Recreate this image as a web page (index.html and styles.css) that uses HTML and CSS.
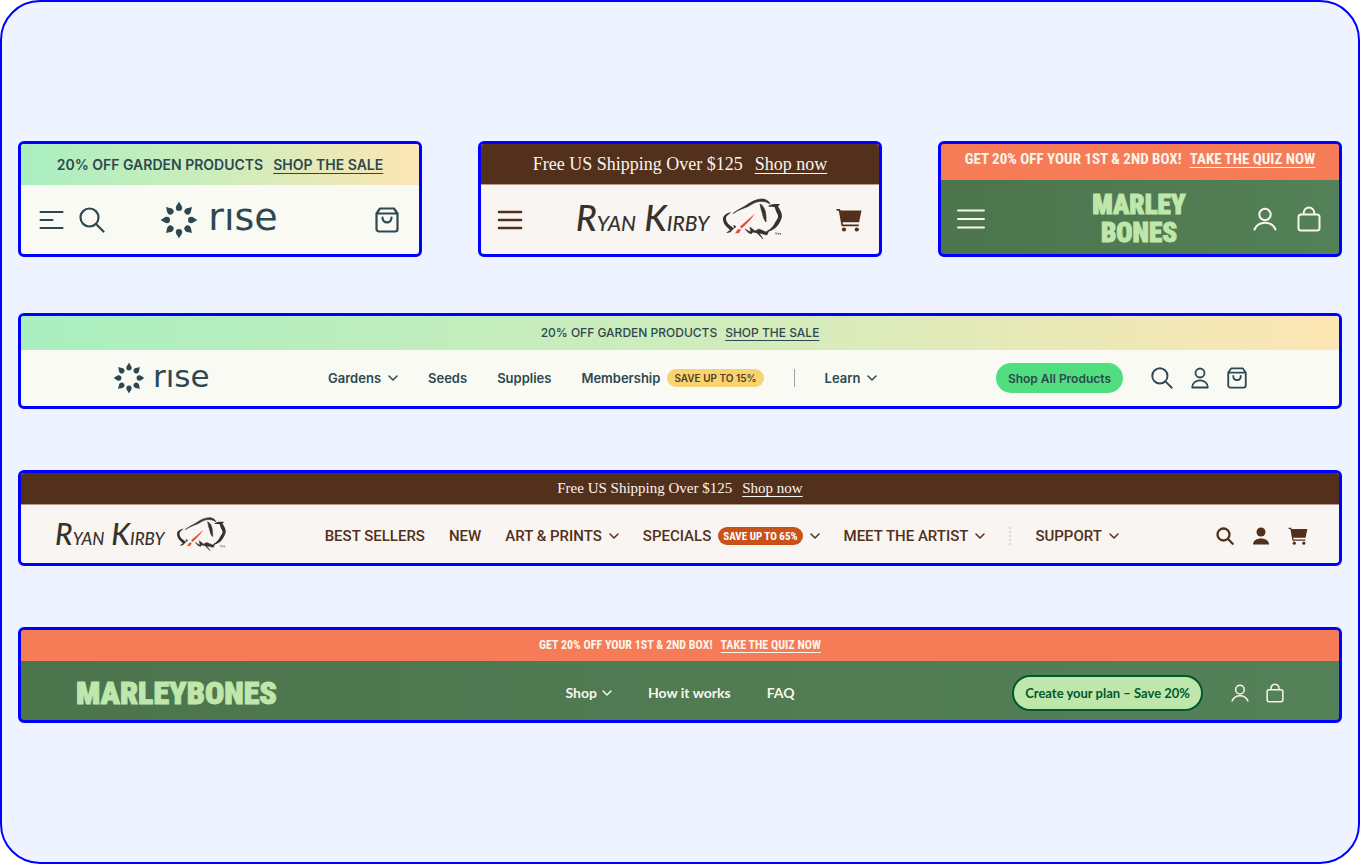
FILE: index.html
```
<!DOCTYPE html>
<html lang="en">
<head>
  <meta charset="utf-8">
  <meta name="viewport" content="width=device-width, initial-scale=1">
  <title>Store headers</title>
  <link rel="stylesheet" href="styles.css">
</head>
<body>

<!-- shared icons and logo marks -->
<svg class="sprite" aria-hidden="true">
  <symbol id="chevron" viewBox="0 0 10 6"><path d="M1 1l4 4 4-4" fill="none" stroke="currentColor" stroke-width="1.5" stroke-linecap="round" stroke-linejoin="round"/></symbol>
  <symbol id="menu-short" viewBox="0 0 24 20"><path d="M1 2h22M1 10h12M1 18h22" fill="none" stroke="currentColor" stroke-width="2" stroke-linecap="round"/></symbol>
  <symbol id="menu-bold" viewBox="0 0 26 20"><path d="M2 2h22M2 10h22M2 18h22" fill="none" stroke="currentColor" stroke-width="2.6" stroke-linecap="round"/></symbol>
  <symbol id="menu-thin" viewBox="0 0 28 20"><path d="M1 1.500h26M1 10h26M1 18.500h26" fill="none" stroke="currentColor" stroke-width="2" stroke-linecap="round"/></symbol>
  <symbol id="search" viewBox="0 0 26 26"><g fill="none" stroke="currentColor" stroke-width="2.200" stroke-linecap="round"><circle cx="10.500" cy="10.500" r="9"/><path d="M17 17l7.500 7.500"/></g></symbol>
  <symbol id="search-bold" viewBox="0 0 18 18"><g fill="none" stroke="currentColor" stroke-width="2.300" stroke-linecap="round"><circle cx="7.500" cy="7.500" r="6"/><path d="M12 12l4.700 4.700"/></g></symbol>
  <symbol id="bag-smile" viewBox="0 0 24 26"><g fill="none" stroke="currentColor" stroke-width="2.200" stroke-linejoin="round" stroke-linecap="round"><path d="M1.500 6.500L5 1.500h14l3.500 5V22a2.500 2.500 0 0 1-2.500 2.500H4A2.500 2.500 0 0 1 1.500 22zM1.500 6.500h21"/><path d="M7.500 10.500c0 6.500 9 6.500 9 0"/></g></symbol>
  <symbol id="user-bust" viewBox="0 0 18 22"><g fill="none" stroke="currentColor" stroke-width="1.800" stroke-linejoin="round"><circle cx="9" cy="6" r="4.500"/><path d="M1.200 20.500c0-9.500 15.600-9.500 15.600 0z"/></g></symbol>
  <symbol id="user-solid" viewBox="0 0 18 18"><circle cx="9" cy="5" r="4.500"/><path d="M1 17.500C1 9.500 17 9.500 17 17.500z"/></symbol>
  <symbol id="user-arc" viewBox="0 0 24 24"><g fill="none" stroke="currentColor" stroke-width="2" stroke-linecap="round"><circle cx="12" cy="7.500" r="5.700"/><path d="M1.500 22.500c4-9 17-9 21 0"/></g></symbol>
  <symbol id="cart" viewBox="0 0 26 24"><path d="M.5 1h3.300l.8 1.500h20.900l-2.400 11.800H6.500l.6 2.200h15.700v1.800H5.600L2.800 2.800H.5z"/><circle cx="8" cy="21.500" r="2.100"/><circle cx="20.800" cy="21.500" r="2.100"/></symbol>
  <symbol id="bag" viewBox="0 0 24 26"><g fill="none" stroke="currentColor" stroke-width="2" stroke-linejoin="round"><rect x="1.500" y="8.500" width="21" height="16" rx="2.500"/><path d="M6.500 8.500C6.500-1 17.500-1 17.500 8.500"/></g></symbol>

  <symbol id="seeds" viewBox="-19 -19 38 38">
    <path id="petal" d="M0-18.500C1-15.800 3.200-14.600 3.200-12.200A3.200 3.200 0 0 1-3.200-12.200C-3.200-14.600-1-15.800 0-18.500z"/>
    <use href="#petal" transform="rotate(45)"/>
    <use href="#petal" transform="rotate(90)"/>
    <use href="#petal" transform="rotate(135)"/>
    <use href="#petal" transform="rotate(180)"/>
    <use href="#petal" transform="rotate(225)"/>
    <use href="#petal" transform="rotate(270)"/>
    <use href="#petal" transform="rotate(315)"/>
  </symbol>

  <symbol id="bison" viewBox="147 0 62 46">
    <path d="M159 16.500c5-4 9-5.500 13-8C178 4 186 .8 191 2.500c2 1 4 1.500 5 4.500-3-2-5-2.500-7-2.500-5-1-10 2-15 5-5 2-10 3.500-15 7z" stroke="currentColor" stroke-width=".7"/>
    <path d="M186 7c4 2 6.500 7 6 18-3-3-3-8-4.500-11.500z" stroke="currentColor" stroke-width=".7"/>
    <path d="M194 9c4-2.500 8-2 12-2l-2 2.500c2 3 4 6 4 10-1 4-3 8-6 11-3 2-5 4-9 4 4-3 7-6 8-9 2-3 3.500-5 3-7-1-3-3-5-3-8-3-1.500-5 0-7-1.500z"/>
    <path d="M157 15.500c-3 0-7 2-8 5.500-.5 6 4 9 7 12l-4 3 4-.5 4-4c-3-2.500-8-5-8-10 0-3 3-4 5-6z"/>
    <path d="M160 28l2 2-2 1zM171 32l7 4-3 .3zM176 30l5 4 4-2 7 3 3-2-2 5-8-2 4 6-6-6-4-1-2 2z" stroke="currentColor" stroke-width=".6"/>
    <path class="accent" d="M181 16.500c-4 6-8 10-13.500 15l-1.500-2zM161 36.500l3-4.500 3 .5-2 3.500z"/>
    <path d="M201 36h2.500M202.200 36v2M204.500 38v-2l1 1 1-1v2" fill="none" stroke="currentColor" stroke-width=".5"/>
  </symbol>
</svg>

<main class="board">

  <div class="mobile-row">
    <section class="card mobile rise">
      <p class="announce">20% OFF GARDEN PRODUCTS <a href="#">SHOP THE SALE</a></p>
      <header class="bar">
        <div class="tools">
          <button class="icon" aria-label="Menu"><svg width="25" height="20"><use href="#menu-short"/></svg></button>
          <button class="icon" aria-label="Search"><svg width="26" height="26"><use href="#search"/></svg></button>
        </div>
        <a class="logo" href="#"><svg width="38" height="38"><use href="#seeds"/></svg><span class="word">rıse</span></a>
        <div class="tools end">
          <button class="icon" aria-label="Cart"><svg width="24" height="26"><use href="#bag-smile"/></svg></button>
        </div>
      </header>
    </section>

    <section class="card mobile kirby">
      <p class="announce">Free US Shipping Over $125 <a href="#">Shop now</a></p>
      <header class="bar">
        <div class="tools">
          <button class="icon" aria-label="Menu"><svg width="26" height="20"><use href="#menu-bold"/></svg></button>
        </div>
        <a class="logo" href="#"><span class="word">R<small>YAN</small> K<small>IRBY</small></span><svg width="62" height="46"><use href="#bison"/></svg></a>
        <div class="tools end">
          <button class="icon" aria-label="Cart"><svg width="26" height="24"><use href="#cart"/></svg></button>
        </div>
      </header>
    </section>

    <section class="card mobile marley">
      <p class="announce">GET 20% OFF YOUR 1ST &amp; 2ND BOX! <a href="#">TAKE THE QUIZ NOW</a></p>
      <header class="bar">
        <div class="tools">
          <button class="icon" aria-label="Menu"><svg width="28" height="20"><use href="#menu-thin"/></svg></button>
        </div>
        <a class="logo" href="#"><span>MARLEY</span><span>BONES</span></a>
        <div class="tools end">
          <button class="icon" aria-label="Account"><svg width="24" height="24"><use href="#user-arc"/></svg></button>
          <button class="icon" aria-label="Cart"><svg width="24" height="26"><use href="#bag"/></svg></button>
        </div>
      </header>
    </section>
  </div>

  <div class="desktop-stack">
    <section class="card desktop rise">
      <p class="announce">20% OFF GARDEN PRODUCTS <a href="#">SHOP THE SALE</a></p>
      <header class="bar">
        <a class="logo" href="#"><svg width="32" height="32"><use href="#seeds"/></svg><span class="word">rıse</span></a>
        <nav class="nav">
          <button class="link">Gardens <svg class="chevron"><use href="#chevron"/></svg></button>
          <a class="link" href="#">Seeds</a>
          <a class="link" href="#">Supplies</a>
          <a class="link" href="#">Membership <span class="badge">SAVE UP TO 15%</span></a>
          <span class="divider"></span>
          <button class="link">Learn <svg class="chevron"><use href="#chevron"/></svg></button>
        </nav>
        <div class="tools">
          <a class="cta" href="#">Shop All Products</a>
          <button class="icon" aria-label="Search"><svg width="22" height="22"><use href="#search"/></svg></button>
          <button class="icon" aria-label="Account"><svg width="18" height="22"><use href="#user-bust"/></svg></button>
          <button class="icon" aria-label="Cart"><svg width="20" height="22"><use href="#bag-smile"/></svg></button>
        </div>
      </header>
    </section>

    <section class="card desktop kirby">
      <p class="announce">Free US Shipping Over $125 <a href="#">Shop now</a></p>
      <header class="bar">
        <a class="logo" href="#"><span class="word">R<small>YAN</small> K<small>IRBY</small></span><svg width="52" height="38"><use href="#bison"/></svg></a>
        <nav class="nav">
          <a class="link" href="#">BEST SELLERS</a>
          <a class="link" href="#">NEW</a>
          <button class="link">ART &amp; PRINTS <svg class="chevron"><use href="#chevron"/></svg></button>
          <button class="link">SPECIALS <span class="badge">SAVE UP TO 65%</span> <svg class="chevron"><use href="#chevron"/></svg></button>
          <button class="link">MEET THE ARTIST <svg class="chevron"><use href="#chevron"/></svg></button>
          <span class="divider"></span>
          <button class="link">SUPPORT <svg class="chevron"><use href="#chevron"/></svg></button>
        </nav>
        <div class="tools">
          <button class="icon" aria-label="Search"><svg width="18" height="18"><use href="#search-bold"/></svg></button>
          <button class="icon" aria-label="Account"><svg width="18" height="18"><use href="#user-solid"/></svg></button>
          <button class="icon" aria-label="Cart"><svg width="20" height="18"><use href="#cart"/></svg></button>
        </div>
      </header>
    </section>

    <section class="card desktop marley">
      <p class="announce">GET 20% OFF YOUR 1ST &amp; 2ND BOX! <a href="#">TAKE THE QUIZ NOW</a></p>
      <header class="bar">
        <a class="logo" href="#">MARLEYBONES</a>
        <nav class="nav">
          <button class="link">Shop <svg class="chevron"><use href="#chevron"/></svg></button>
          <a class="link" href="#">How it works</a>
          <a class="link" href="#">FAQ</a>
        </nav>
        <div class="tools end">
          <a class="cta" href="#">Create your plan – Save 20%</a>
          <button class="icon" aria-label="Account"><svg width="18" height="18"><use href="#user-arc"/></svg></button>
          <button class="icon" aria-label="Cart"><svg width="18" height="20"><use href="#bag"/></svg></button>
        </div>
      </header>
    </section>
  </div>

</main>

</body>
</html>
```
FILE: styles.css
```
* {box-sizing: border-box;}
body {margin: 0; background: #fff;}
a {color: inherit; text-decoration: none;}
button {margin: 0; padding: 0; border: 0; background: none; color: inherit; font: inherit; cursor: pointer;}
svg {display: block; fill: currentColor;}
.sprite {position: absolute; width: 0; height: 0;}

.board {min-height: 100vh; padding: 16px; display: flex; flex-direction: column; justify-content: center; gap: 56px; background: #eef3ff; border: 2px solid #00f; border-radius: 40px;}
.mobile-row {display: grid; grid-template-columns: repeat(3, 1fr); gap: 56px;}
.desktop-stack {display: grid; gap: 61px;}

.card {display: flex; flex-direction: column; border: 3px solid #00f; border-radius: 6px; overflow: hidden;}
.mobile {min-height: 116px;}
.desktop {min-height: 96px;}
.announce {margin: 0; display: flex; align-items: center; justify-content: center; white-space: nowrap;}
.announce a {text-decoration: underline; text-decoration-thickness: 1px; text-decoration-skip-ink: none; text-underline-offset: 3px;}
.bar {flex: 1; display: flex; align-items: center; justify-content: space-between;}
.mobile .bar {display: grid; grid-template-columns: 1fr auto 1fr;}
.logo {display: flex; align-items: flex-start; white-space: nowrap;}
.tools, .nav, .link {display: flex; align-items: center;}
.end {justify-content: flex-end;}
.link {gap: 7px; white-space: nowrap;}
.chevron {width: 10px; height: 6px;}
.badge {display: flex; align-items: center; height: 18px; border-radius: 9px;}
.cta {display: flex; align-items: center; white-space: nowrap;}

/* rise */
.rise {background: #fafaf5; color: #2d4850; font-family: Inter, sans-serif; font-weight: 600;}
.rise .announce {background: linear-gradient(90deg, #a9efc0, #d3ecbb 55%, #fde6b4); gap: 10px;}
.rise.mobile .announce {height: 41px; font-size: 14px; line-height: 18px;}
.rise.mobile .bar {padding: 0 20px 0 18px;}
.rise.mobile .tools {gap: 15px;}
.rise.desktop .announce {height: 34px; font-size: 12px; line-height: 14px; font-weight: 500; gap: 8px;}
.rise.desktop .bar {padding: 0 92px;}
.rise .nav {gap: 30px; font-size: 13px;}
.rise .badge {padding: 0 7px; background: #f9d371; color: #53401f; font-size: 10px;}
.rise .divider {width: 1px; height: 18px; background: #96a3a5;}
.rise.desktop .tools {gap: 18px;}
.rise .cta {height: 30px; margin-right: 10px; padding: 0 12px; border-radius: 15px; background: #50de7e; font-size: 12px;}
.rise .logo {gap: 10px;}
.rise .word {font-family: "DejaVu Sans", sans-serif; font-size: 38px; font-weight: 400; line-height: 32px;}
.rise.desktop .logo {gap: 8px;}
.rise.desktop .word {font-size: 31px; line-height: 28px;}

/* ryan kirby */
.kirby {background: #f9f5f2; color: #53301b; font-family: Roboto, sans-serif; font-weight: 500;}
.kirby .announce {background: #53301b; border-bottom: 1px solid #b79d8e; color: #f9f5f2; font-family: "Liberation Serif", serif; font-weight: 400; gap: 12px;}
.kirby.mobile .announce {height: 41px; font-size: 18px; line-height: 18px;}
.kirby.mobile .bar {padding: 0 17px 0 16px;}
.kirby.desktop .announce {height: 32px; padding-bottom: 2px; font-size: 15px; line-height: 14px; gap: 10px;}
.kirby.desktop .bar {padding: 4px 31px 0 34px;}
.kirby .logo {gap: 12px; color: #38322c;}
.kirby .word {font-family: Lato, sans-serif; font-size: 36px; font-style: italic; font-weight: 500; line-height: 40px;}
.kirby .word small {font-size: 21px;}
.kirby.desktop .logo {gap: 11px;}
.kirby.desktop .word {font-size: 30px; line-height: 34px;}
.kirby.desktop .word small {font-size: 17px;}
.kirby .nav {gap: 24px; font-size: 15px;}
.kirby .badge {padding: 0 5px; background: #c95218; color: #fff; font-family: "Roboto Condensed", Roboto, sans-serif; font-size: 11px; font-weight: 700;}
.kirby .divider {height: 18px; border-left: 2px dotted #ddd6d2;}
.kirby.desktop .tools {gap: 18px;}
.accent {fill: #f04a2c;}

/* marley bones */
.marley {background: linear-gradient(90deg, #4c744d, #548158); color: #faf5ec; font-family: Lato, sans-serif; font-weight: 700;}
.marley .announce {background: #f57c56; font-family: "Roboto Condensed", Roboto, sans-serif; gap: 8px;}
.marley.mobile .announce {height: 36px; padding-bottom: 6px; font-size: 15px; line-height: 18px;}
.marley.mobile .bar {padding: 4px 18px 0 16px;}
.marley.mobile .tools {gap: 20px;}
.marley.desktop .announce {height: 31px; padding-bottom: 2px; font-size: 12px; line-height: 14px;}
.marley.desktop .bar {display: grid; grid-template-columns: 1fr auto 1fr; padding: 4px 55px 0;}
.marley .logo {color: #bfe7ab; font-family: "Roboto Condensed", Roboto, sans-serif; font-size: 32px; font-weight: 900; line-height: 34px; -webkit-text-stroke: 1px #bfe7ab;}
.marley.mobile .logo {display: grid; justify-items: center; font-size: 27px; line-height: 26px; row-gap: 2px;}
.marley .nav {gap: 36px; font-size: 14px;}
.marley .link {gap: 5px;}
.marley.desktop .tools {gap: 17px;}
.marley .cta {height: 36px; margin-right: 11px; padding: 0 11px; border: 2px solid #00592f; border-radius: 18px; background: #bfe7ab; color: #00592f; font-size: 13px;}
```
